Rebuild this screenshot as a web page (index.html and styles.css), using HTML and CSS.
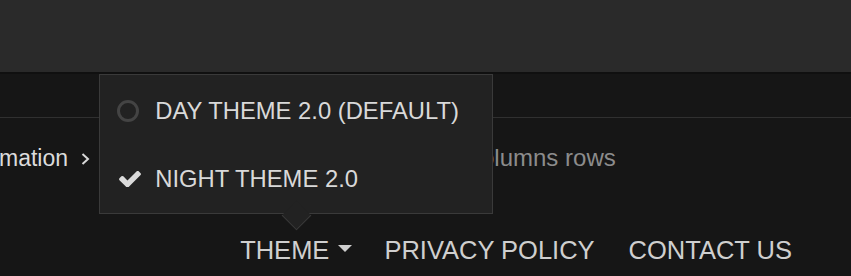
FILE: index.html
```html
<!DOCTYPE html>
<html>
<head>
<meta charset="utf-8">
<link rel="stylesheet" href="styles.css">
</head>
<body>
<div class="topbar"></div>
<div class="subnav"></div>
<div class="content">
  <div class="crumb">mation
    <svg class="chev" width="9" height="12" viewBox="0 0 9 12"><polyline points="1.5,1 7,6 1.5,11" fill="none" stroke="#d8d8d8" stroke-width="2"/></svg>
  </div>
  <div class="muted">columns rows</div>
</div>
<div class="footer">
  <div class="theme-item">
    <span>THEME</span><span class="caret"></span>
    <div class="dropdown">
      <div class="opt">
        <span class="radio"></span><span>DAY THEME 2.0 (DEFAULT)</span>
      </div>
      <div class="opt">
        <svg class="check" width="22" height="16" viewBox="117 370 1554 1084"><path d="M1671 566q0 40-28 68l-724 724-136 136q-28 28-68 28t-68-28l-136-136-362-362q-28-28-28-68t28-68l136-136q28-28 68-28t68 28l294 295 656-657q28-28 68-28t68 28l136 136q28 28 28 68z" fill="#dadada"/></svg><span>NIGHT THEME 2.0</span>
      </div>
      <span class="arrow"></span>
    </div>
  </div>
  <a class="link">PRIVACY POLICY</a>
  <a class="link">CONTACT US</a>
</div>
</body>
</html>
```

FILE: styles.css
```css
* { box-sizing: border-box; }
html, body { margin: 0; padding: 0; }
body {
  background: #161616;
  font-family: "Liberation Sans", Arial, sans-serif;
  color: #d6d6d6;
  width: 851px;
  height: 276px;
  overflow: hidden;
}
.topbar {
  height: 74px;
  background: #2a2a2a;
  border-bottom: 2px solid #101010;
}
.subnav {
  height: 44px;
  border-bottom: 1px solid #303030;
}
.content {
  display: grid;
  grid-template-columns: 469px auto;
  align-items: start;
  padding-top: 25px;
  height: 117px;
  line-height: 30px;
}
.crumb {
  font-size: 23px;
  color: #dcdcdc;
  margin-left: -1px;
  display: flex;
  align-items: center;
  gap: 13px;
}
.chev { margin-top: 1px; }
.muted {
  font-size: 24px;
  color: #8c8c8c;
}
.footer {
  display: flex;
  justify-content: flex-end;
  gap: 34px;
  padding-right: 59px;
  font-size: 25.5px;
  line-height: 30px;
  color: #cfcfcf;
}
.theme-item {
  position: relative;
  display: flex;
  align-items: center;
  margin-right: -2px;
}
.caret {
  width: 0;
  height: 0;
  margin-left: 9px;
  margin-top: -4px;
  border-left: 7px solid transparent;
  border-right: 7px solid transparent;
  border-top: 7px solid #cfcfcf;
}
.dropdown {
  position: absolute;
  left: calc(50% - 197px);
  bottom: calc(100% + 21px);
  width: 394px;
  background: #222222;
  border: 1px solid #3a3a3a;
  padding: 2px 0 0 17px;
  font-size: 23.8px;
  color: #d9d9d9;
}
.opt {
  height: 68px;
  display: flex;
  align-items: center;
  gap: 16px;
  line-height: 30px;
  white-space: nowrap;
}
.radio {
  width: 22px;
  height: 22px;
  border-radius: 50%;
  border: 3px solid #444;
  margin-top: -1px;
}
.check { margin-left: 2px; margin-right: -2px; }
.arrow {
  position: absolute;
  left: calc(50% - 10.5px);
  bottom: -13px;
  width: 21px;
  height: 21px;
  background: #222222;
  border-right: 1px solid #3a3a3a;
  border-bottom: 1px solid #3a3a3a;
  transform: rotate(45deg);
}
```
